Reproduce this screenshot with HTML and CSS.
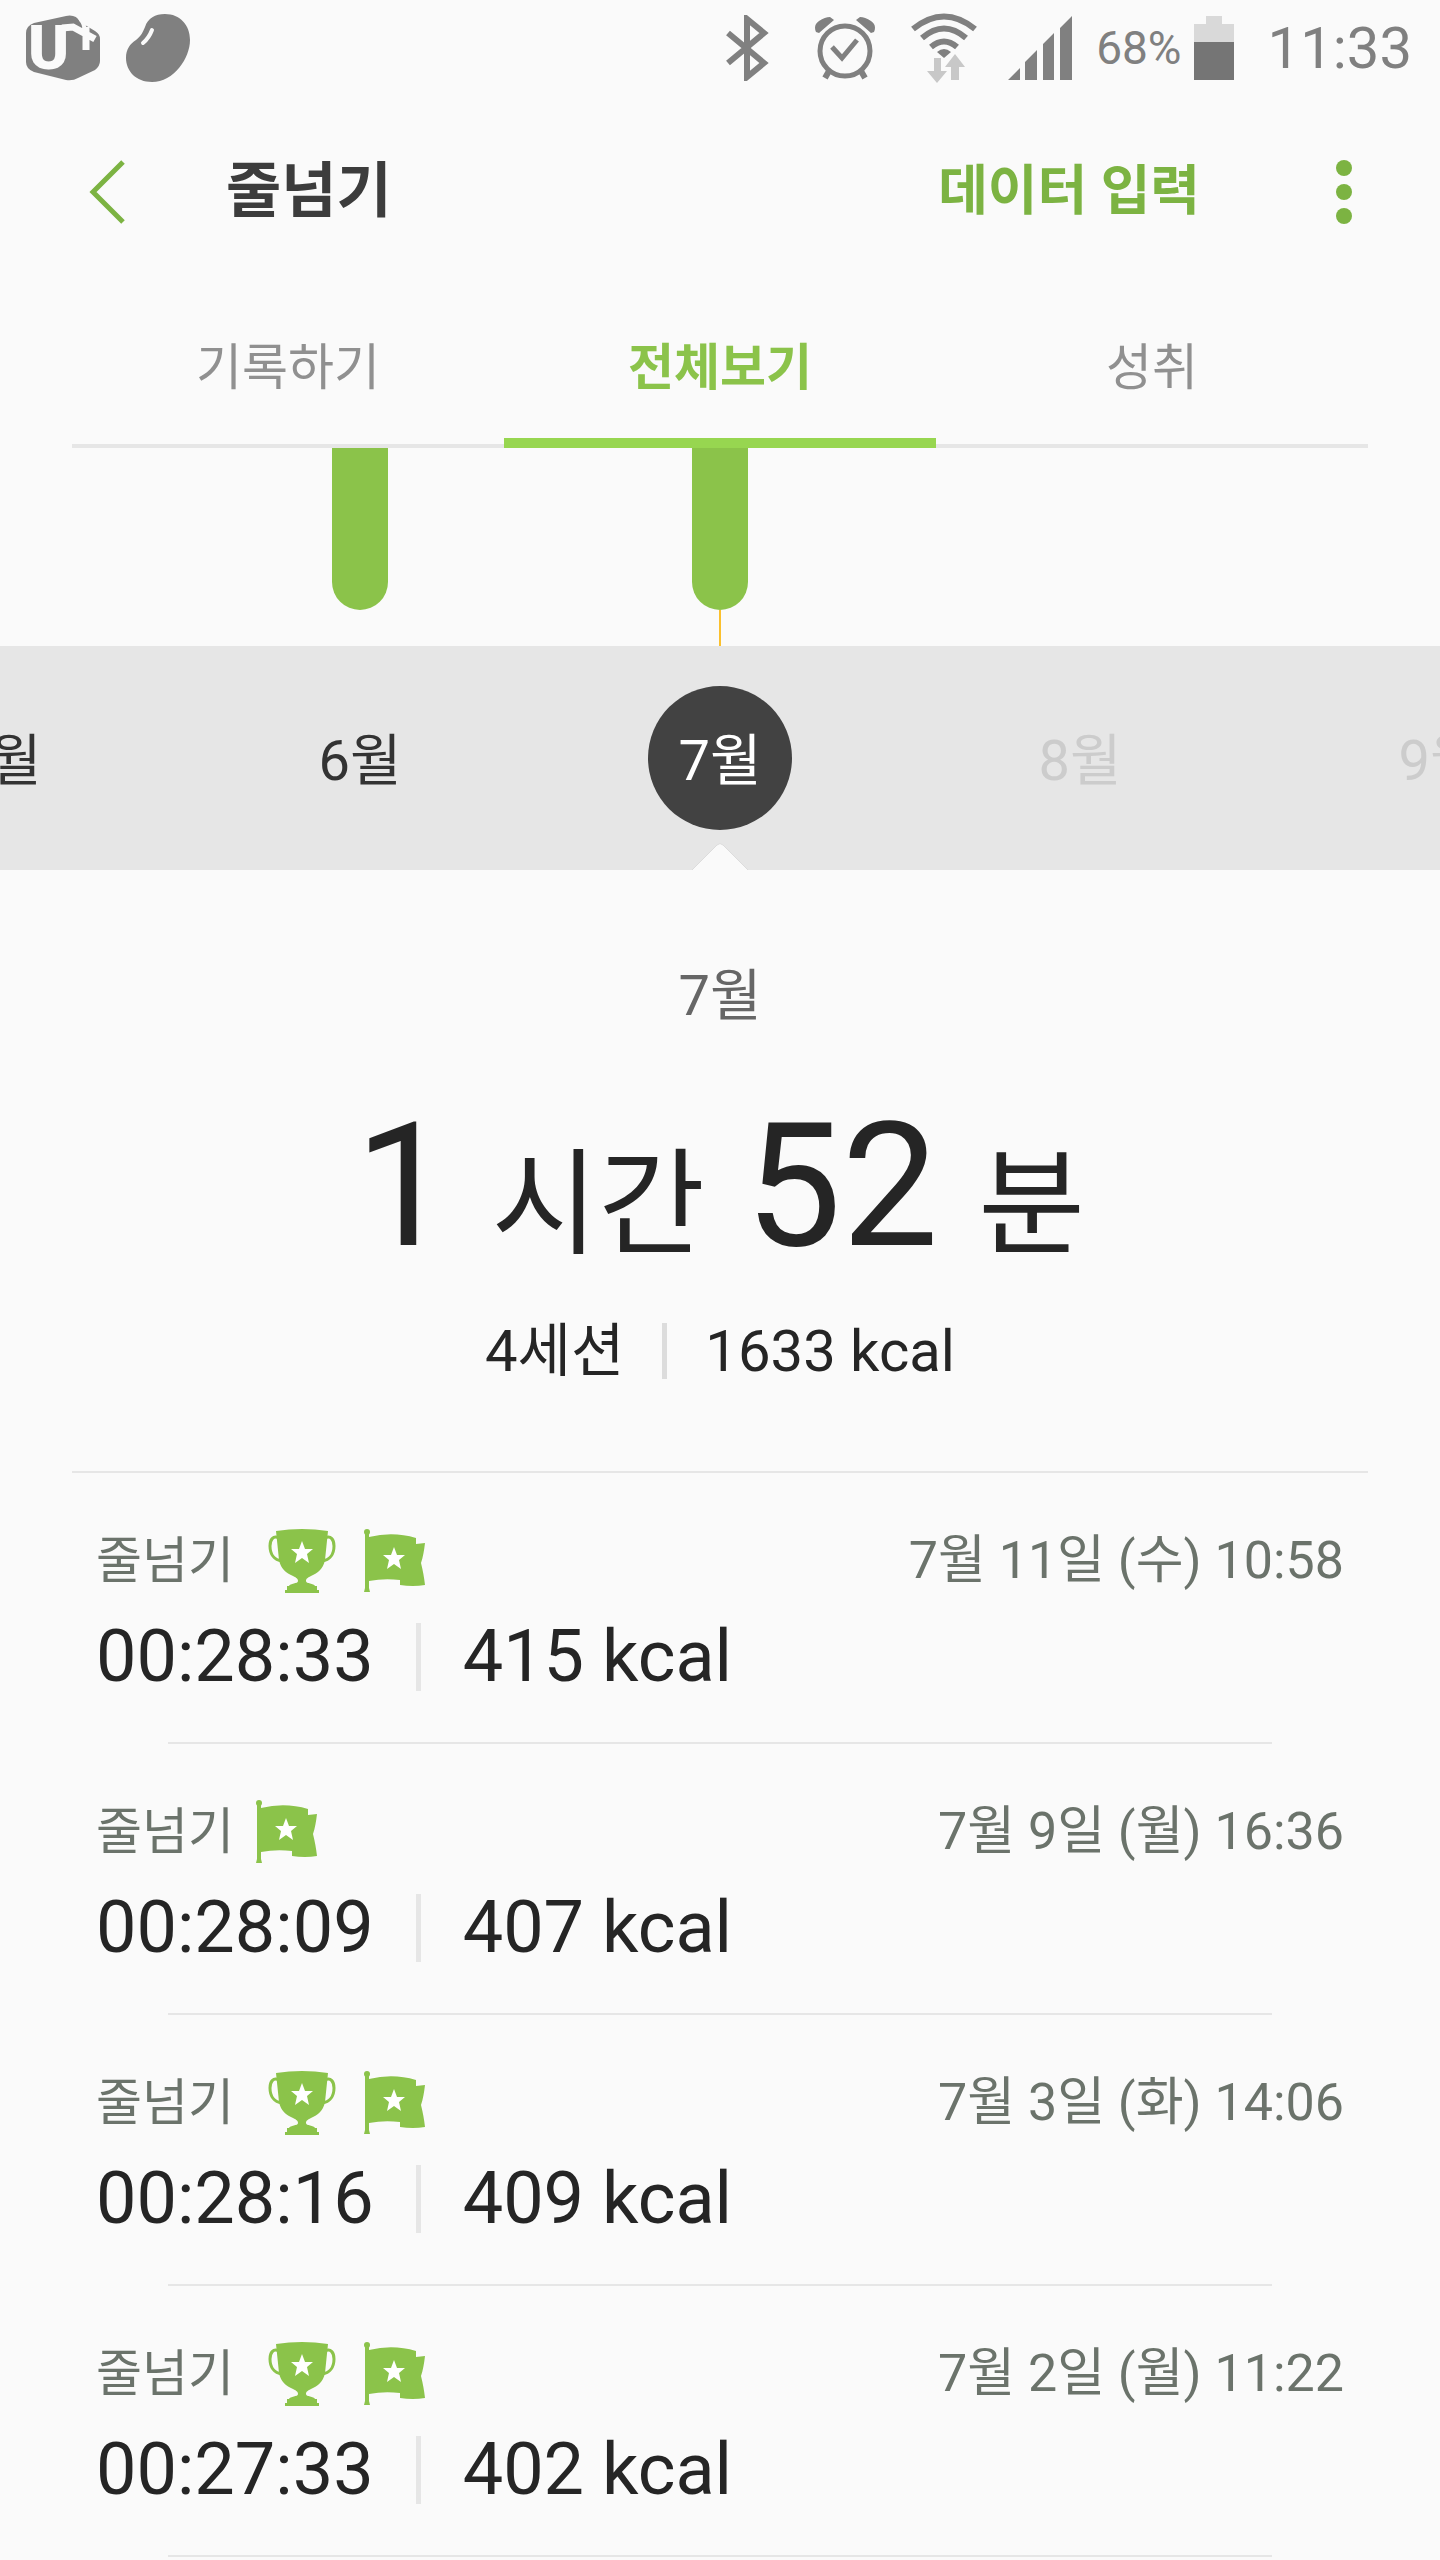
FILE: index.html
```html
<!DOCTYPE html>
<html lang="ko">
<head>
    <meta charset="UTF-8">
    <meta name="viewport" content="width=device-width, initial-scale=1.0">
    <title>줄넘기</title>
    <link rel="stylesheet" href="styles.css">
</head>
<body>
<svg class="sprite" aria-hidden="true">
    <symbol id="trophy" viewBox="0 0 68 64">
        <path d="M11 9C5 6 2 11 2 17c0 8 4 14 12 15M57 9c6-3 9 2 9 8 0 8-4 14-12 15" fill="none" stroke="currentColor" stroke-width="3"/>
        <path fill="currentColor" d="M8 2q26-4 52 0l-3 29c-2 9-7 13-14 16-4 2-5 3-5 5 0 3 8 2 9 5H21c1-3 9-2 9-5 0-2-1-3-5-5-7-3-12-7-14-16zM19 57h30v4h2v3H17v-3h2z"/>
        <path fill="#fff" d="M34 12l3 8h8l-6 5 2 9-7-5-7 5 2-9-6-5h8z"/>
    </symbol>
    <symbol id="flag" viewBox="0 0 62 64">
        <circle cx="3" cy="3" r="3" fill="currentColor"/>
        <path fill="currentColor" d="M1 5h4v3q24-6 47 1v6l9-1c-1 8-2 14-4 20 2 8 3 14 4 22q-12 2-25 0v-5q-16-2-31 1v7l1 4H0l1-4z"/>
        <path fill="#fff" d="M30 18l3 8h8l-6 5 2 9-7-5-7 5 2-9-6-5h8z"/>
    </symbol>
</svg>

<div class="status-bar">
    <svg class="icon-carrier" viewBox="0 0 74 66">
        <path fill="#808080" d="M8 8L40 1q10-2 14 6l15 9q5 3 5 8v22q0 5-5 9L52 63q-5 3-12 2L8 57q-8-3-8-10V18q0-7 8-10z"/>
        <text x="2" y="54" class="carrier-u">U</text>
        <path d="M36 13l11-1 22 12M60 12v23" fill="none" stroke="#fafafa" stroke-width="7"/>
        <path d="M54 3q4 5 5 13" fill="none" stroke="#fafafa" stroke-width="4"/>
    </svg>
    <svg class="icon-bean" viewBox="0 0 64 68">
        <path fill="#808080" d="M39 0c15 0 25 11 25 26 0 18-16 42-38 42C10 68 0 57 0 44c0-9 4-14 10-18 5-4 7-8 9-13C22 4 29 0 39 0z"/>
        <path d="M26 16q-3 8-9 13" fill="none" stroke="#fafafa" stroke-width="4" stroke-linecap="round"/>
    </svg>
    <div class="status-right">
        <svg class="icon-bluetooth" viewBox="0 0 46 66">
            <path d="M3 18l36 30-17 14V4l17 14L3 48" fill="none" stroke="#808080" stroke-width="6"/>
        </svg>
        <svg class="icon-alarm" viewBox="0 0 60 64">
            <g fill="none" stroke="#808080">
                <circle cx="30" cy="35" r="25" stroke-width="5"/>
                <path d="M17 31l10 11 15-18" stroke-width="5"/>
                <path d="M14 55l-4 7M46 55l4 7" stroke-width="6"/>
            </g>
            <path fill="#808080" d="M1 16q-3-7 3-11T15 1l4 3L4 17zM59 16q3-7-3-11T45 1l-4 3 15 13z"/>
        </svg>
        <svg class="icon-wifi" viewBox="0 0 66 70">
            <g fill="none" stroke="#808080" stroke-width="6">
                <path d="M2 16Q33-9 64 16M11 25q22-19 44 0M20 34q13-11 26 0"/>
            </g>
            <path fill="#808080" d="M26 39q7-6 14 0l-7 6z"/>
            <path fill="#c8c8c8" d="M23 45h7v13h6L26 70 16 58h7zM44 41l10 13h-6v13h-8V54h-6z"/>
        </svg>
        <svg class="icon-signal" viewBox="0 0 64 64">
            <path fill="#808080" d="M0 64l12-12v12zM17 64V46l12-12v30zM35 64V28l11-11v47zM52 64V12L64 0v64z"/>
        </svg>
        <span class="battery-text">68%</span>
        <svg class="icon-battery" viewBox="0 0 40 64">
            <path fill="#d9d9d9" d="M12 0h16v8h12v18H0V8h12z"/>
            <path fill="#757575" d="M0 26h40v38H0z"/>
        </svg>
        <span class="clock">11:33</span>
    </div>
</div>

<header class="app-bar">
    <a href="#" class="back" aria-label="뒤로">
        <svg viewBox="0 0 38 64"><path d="M35 2L5 32l30 30" fill="none" stroke="currentColor" stroke-width="5"/></svg>
    </a>
    <h1>줄넘기</h1>
    <button type="button" class="data-input">데이터 입력</button>
    <button type="button" class="more" aria-label="더보기">
        <svg viewBox="0 0 16 64"><g fill="currentColor"><circle cx="8" cy="8" r="8"/><circle cx="8" cy="32" r="8"/><circle cx="8" cy="56" r="8"/></g></svg>
    </button>
</header>

<nav class="tabs">
    <a href="#">기록하기</a>
    <a href="#" class="active">전체보기</a>
    <a href="#">성취</a>
</nav>

<div class="chart">
    <div class="col"></div>
    <div class="col"><div class="bar"></div></div>
    <div class="col selected"><div class="bar"></div></div>
    <div class="col"></div>
    <div class="col"></div>
</div>

<div class="months">
    <button type="button">5월</button>
    <button type="button">6월</button>
    <button type="button" class="selected">7월</button>
    <button type="button" disabled>8월</button>
    <button type="button" disabled>9월</button>
    <svg class="pointer" viewBox="0 0 56 28"><path d="M0 28L25 3q3-3 6 0l25 25" fill="#fafafa" stroke="#dcdcdc" stroke-width="1"/></svg>
</div>

<section class="summary">
    <h2>7월</h2>
    <p class="total"><b>1</b> <span>시간</span> <b>52</b> <span>분</span></p>
    <p class="meta"><span>4세션</span><i class="divider"></i><span>1633 kcal</span></p>
</section>

<ul class="records">
    <li>
        <div class="record-head">
            <span class="name">줄넘기</span>
            <svg class="trophy"><use href="#trophy"/></svg>
            <svg class="flag"><use href="#flag"/></svg>
            <time>7월 11일 (수) 10:58</time>
        </div>
        <div class="record-value"><span>00:28:33</span><i class="divider"></i><span>415 kcal</span></div>
    </li>
    <li>
        <div class="record-head">
            <span class="name">줄넘기</span>
            <svg class="flag"><use href="#flag"/></svg>
            <time>7월 9일 (월) 16:36</time>
        </div>
        <div class="record-value"><span>00:28:09</span><i class="divider"></i><span>407 kcal</span></div>
    </li>
    <li>
        <div class="record-head">
            <span class="name">줄넘기</span>
            <svg class="trophy"><use href="#trophy"/></svg>
            <svg class="flag"><use href="#flag"/></svg>
            <time>7월 3일 (화) 14:06</time>
        </div>
        <div class="record-value"><span>00:28:16</span><i class="divider"></i><span>409 kcal</span></div>
    </li>
    <li>
        <div class="record-head">
            <span class="name">줄넘기</span>
            <svg class="trophy"><use href="#trophy"/></svg>
            <svg class="flag"><use href="#flag"/></svg>
            <time>7월 2일 (월) 11:22</time>
        </div>
        <div class="record-value"><span>00:27:33</span><i class="divider"></i><span>402 kcal</span></div>
    </li>
</ul>
</body>
</html>
```
FILE: styles.css
```css
* {
    box-sizing: border-box;
}

body {
    margin: 0;
    background-color: #fafafa;
    color: #252525;
    font-family: Roboto, "Noto Sans CJK KR", sans-serif;
    overflow-x: hidden;
}

h1, h2, p, ul {
    margin: 0;
    padding: 0;
    font-weight: 400;
}

a {
    color: inherit;
    text-decoration: none;
}

button {
    border: none;
    padding: 0;
    background: none;
    color: inherit;
    font-family: inherit;
    cursor: pointer;
}

svg {
    display: block;
    flex-shrink: 0;
}

.sprite {
    display: none;
}

/* 상태 표시줄 */
.status-bar {
    display: flex;
    align-items: center;
    height: 96px;
    padding: 0 28px 0 26px;
    color: #808080;
}

.icon-carrier {
    width: 74px;
    height: 66px;
}

.carrier-u {
    font-size: 62px;
    font-weight: 900;
    fill: #fafafa;
}

.icon-bean {
    width: 64px;
    height: 68px;
    margin-left: 26px;
}

.status-right {
    display: flex;
    align-items: center;
    margin-left: auto;
}

.icon-bluetooth {
    width: 46px;
    height: 66px;
    margin-right: 44px;
}

.icon-alarm {
    width: 60px;
    height: 64px;
    margin-right: 36px;
}

.icon-wifi {
    width: 66px;
    height: 70px;
    margin-right: 31px;
}

.icon-signal {
    width: 64px;
    height: 64px;
    margin-right: 24px;
}

.battery-text {
    font-size: 46px;
    line-height: 64px;
}

.icon-battery {
    width: 40px;
    height: 64px;
    margin: 0 34px 0 12px;
}

.clock {
    font-size: 58px;
    line-height: 64px;
}

/* 앱 바 */
.app-bar {
    display: flex;
    align-items: center;
    height: 192px;
    padding: 0 88px;
    color: #7cb342;
}

.back svg {
    width: 38px;
    height: 64px;
}

.app-bar h1 {
    margin-left: 100px;
    color: #3c3c3c;
    font-size: 60px;
    font-weight: 700;
    line-height: 80px;
}

.data-input {
    margin-left: auto;
    margin-right: 136px;
    font-size: 54px;
    font-weight: 700;
    line-height: 80px;
}

.more svg {
    width: 16px;
    height: 64px;
}

/* 탭 */
.tabs {
    display: grid;
    grid-template-columns: repeat(3, 1fr);
    height: 160px;
    margin: 0 72px;
    border-bottom: 4px solid #e6e6e6;
    color: #909090;
    font-size: 50px;
    line-height: 160px;
    text-align: center;
}

.tabs a {
    height: 160px;
}

.tabs .active {
    border-bottom: 10px solid #97d650;
    color: #8bc34a;
    font-weight: 700;
}

/* 월별 차트 */
.chart,
.months {
    display: grid;
    grid-template-columns: repeat(5, 25%);
    justify-content: center;
    overflow: hidden;
}

.chart {
    height: 198px;
}

.col {
    display: flex;
    flex-direction: column;
    align-items: center;
}

.bar {
    width: 56px;
    height: 162px;
    border-radius: 0 0 28px 28px;
    background-color: #8bc34a;
}

.col.selected::after {
    content: "";
    flex: 1;
    width: 2px;
    background-color: #fbc02d;
}

.months {
    position: relative;
    height: 224px;
    align-items: center;
    justify-items: center;
    background-color: #e6e6e6;
}

.months button {
    width: 144px;
    height: 144px;
    padding-bottom: 6px;
    border-radius: 50%;
    color: #333;
    font-size: 56px;
}

.months button:disabled {
    color: #ccc;
}

.months .selected {
    background-color: #424242;
    color: #fff;
}

.pointer {
    position: absolute;
    bottom: 0;
    left: 50%;
    width: 56px;
    height: 28px;
    margin-left: -28px;
}

/* 월 요약 */
.summary {
    margin: 0 72px;
    padding: 86px 0 80px;
    border-bottom: 2px solid #e6e6e6;
    text-align: center;
}

.summary h2 {
    color: #666;
    font-size: 56px;
    line-height: 80px;
}

.total {
    display: flex;
    justify-content: center;
    align-items: baseline;
    gap: 40px;
    margin-top: 50px;
    font-size: 116px;
    line-height: 200px;
}

.total b {
    font-size: 172px;
    font-weight: 400;
}

.meta,
.record-value {
    display: flex;
    align-items: center;
}

.meta {
    justify-content: center;
    margin-top: 6px;
    font-size: 58px;
    line-height: 80px;
}

.divider {
    width: 5px;
    height: 56px;
    margin: 0 42px;
    background-color: #dcdcdc;
}

.meta .divider {
    margin: 0 38px;
}

/* 운동 기록 */
.records {
    list-style: none;
}

.records li {
    height: 271px;
    padding: 48px 96px 0;
    /* 구분선은 좌우 168px 안쪽부터 */
    background: linear-gradient(#e6e6e6, #e6e6e6) center bottom / calc(100% - 336px) 2px no-repeat;
}

.record-head {
    display: flex;
    align-items: center;
    height: 80px;
    color: #6b736b;
    line-height: 80px;
}

.name {
    margin-right: 22px;
    font-size: 50px;
}

.trophy {
    width: 68px;
    height: 64px;
    margin-left: 12px;
    margin-right: 28px;
    color: #8bc34a;
}

.flag {
    width: 62px;
    height: 64px;
    color: #8bc34a;
}

.record-head time {
    margin-left: auto;
    font-size: 52px;
}

.record-value {
    margin-top: 14px;
    font-size: 72px;
    line-height: 84px;
}

.record-value .divider {
    height: 68px;
    background-color: #e6e6e6;
}
```
